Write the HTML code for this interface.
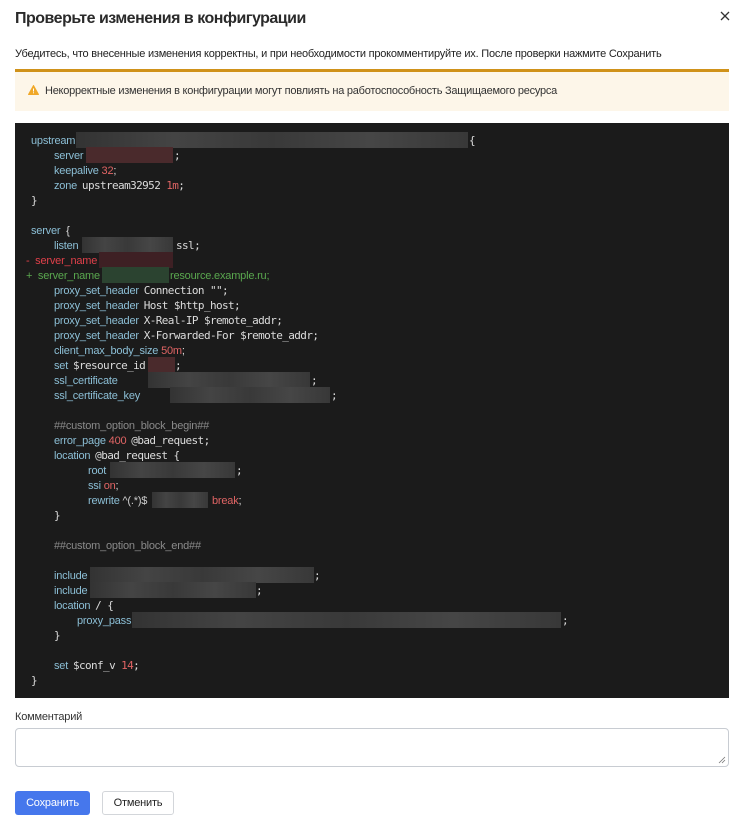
<!DOCTYPE html>
<html><head><meta charset="utf-8"><style>
*{margin:0;padding:0;box-sizing:border-box}
body{width:745px;height:827px;background:#fff;font-family:"Liberation Sans",sans-serif;color:#222;position:relative;overflow:hidden}
.a{position:absolute;white-space:nowrap}
h1{position:absolute;left:15px;top:10px;font-size:16px;font-weight:bold;color:#2a2a2a;letter-spacing:-0.5px}
.code{position:absolute;left:15px;top:123px;width:714px;height:575px;background:#1b1b1b}
.s{position:absolute;white-space:nowrap;font-family:"Liberation Sans",sans-serif;font-size:11px;line-height:14px;color:#8cbfd6;letter-spacing:-0.2px}
.m{position:absolute;white-space:nowrap;font-family:"DejaVu Sans Mono","Liberation Mono",monospace;font-size:11px;line-height:14px;color:#dcdcdc;letter-spacing:-0.6px}
.s .m{margin-left:2px}
.r{color:#e06464}
.c{color:#8a8a8a}
.b{position:absolute;height:16px;background:linear-gradient(90deg,#333,#444,#393939,#464646,#383838)}
.br{background:#4a2a2c}
.bg{background:#2b4330}
</style></head><body>
<h1>Проверьте изменения в конфигурации</h1>
<svg class="a" style="left:720px;top:11px" width="10" height="10"><path d="M1 1L9 9M9 1L1 9" stroke="#333" stroke-width="1.3"/></svg>
<div class="a" style="left:15px;top:48px;font-size:11px;color:#222;letter-spacing:-0.22px">Убедитесь, что внесенные изменения корректны, и при необходимости прокомментируйте их. После проверки нажмите Сохранить</div>
<div class="a" style="left:15px;top:69px;width:714px;height:3px;background:#d0921a"></div>
<div class="a" style="left:15px;top:72px;width:714px;height:39px;background:#fdf6e9"></div>
<svg class="a" style="left:28px;top:85px" width="11" height="10" viewBox="0 0 11 10"><path d="M5.5 0.5 L10.5 9.5 L0.5 9.5 Z" fill="#f0a828" stroke="#f0a828" stroke-linejoin="round"/><rect x="5" y="3.5" width="1" height="3" fill="#fff"/><rect x="5" y="7.3" width="1" height="1" fill="#fff"/></svg>
<div class="a" style="left:45px;top:85px;font-size:11px;color:#333;letter-spacing:-0.25px">Некорректные изменения в конфигурации могут повлиять на работоспособность Защищаемого ресурса</div>

<div class="code"></div>
<div class="s" style="left:31px;top:134px">upstream</div><div class="b" style="left:76px;top:132px;width:392px"></div><div class="m" style="left:469px;top:134px">{</div>
<div class="s" style="left:54px;top:149px">server</div><div class="b br" style="left:86px;top:147px;width:87px"></div><div class="m" style="left:174px;top:149px">;</div>
<div class="s" style="left:54px;top:164px">keepalive <span class="r">32</span><span style="color:#ddd">;</span></div>
<div class="s" style="left:54px;top:179px">zone <span class="m" style="position:static">upstream32952 <span class="r">1m</span>;</span></div>
<div class="m" style="left:31px;top:194px">}</div>
<div class="s" style="left:31px;top:224px">server &nbsp;<span style="color:#ddd">{</span></div>
<div class="s" style="left:54px;top:239px">listen</div><div class="b" style="left:82px;top:237px;width:91px"></div><div class="m" style="left:176px;top:239px">ssl;</div>
<div class="s" style="left:26px;top:254px;color:#e0404a">-&nbsp; server_name</div><div class="b br" style="left:99px;top:252px;width:74px;background:#3e2024"></div>
<div class="s" style="left:26px;top:269px;color:#5aa84f">+&nbsp; server_name</div><div class="b bg" style="left:102px;top:267px;width:67px"></div><div class="s" style="left:170px;top:269px;color:#5aa84f">resource.example.ru;</div>
<div class="s" style="left:54px;top:284px">proxy_set_header <span class="m" style="position:static">Connection "";</span></div>
<div class="s" style="left:54px;top:299px">proxy_set_header <span class="m" style="position:static">Host $http_host;</span></div>
<div class="s" style="left:54px;top:314px">proxy_set_header <span class="m" style="position:static">X-Real-IP $remote_addr;</span></div>
<div class="s" style="left:54px;top:329px">proxy_set_header <span class="m" style="position:static">X-Forwarded-For $remote_addr;</span></div>
<div class="s" style="left:54px;top:344px">client_max_body_size <span class="r">50m</span><span style="color:#ddd">;</span></div>
<div class="s" style="left:54px;top:359px">set <span class="m" style="position:static">$resource_id</span></div><div class="b br" style="left:148px;top:357px;width:27px"></div><div class="m" style="left:175px;top:359px">;</div>
<div class="s" style="left:54px;top:374px">ssl_certificate</div><div class="b" style="left:148px;top:372px;width:162px"></div><div class="m" style="left:311px;top:374px">;</div>
<div class="s" style="left:54px;top:389px">ssl_certificate_key</div><div class="b" style="left:170px;top:387px;width:160px"></div><div class="m" style="left:331px;top:389px">;</div>
<div class="s c" style="left:54px;top:419px">##custom_option_block_begin##</div>
<div class="s" style="left:54px;top:434px">error_page <span class="r">400</span> <span class="m" style="position:static">@bad_request;</span></div>
<div class="s" style="left:54px;top:449px">location <span class="m" style="position:static">@bad_request {</span></div>
<div class="s" style="left:88px;top:464px">root</div><div class="b" style="left:110px;top:462px;width:125px"></div><div class="m" style="left:236px;top:464px">;</div>
<div class="s" style="left:88px;top:479px">ssi <span class="r">on</span><span style="color:#ddd">;</span></div>
<div class="s" style="left:88px;top:494px">rewrite <span style="color:#ccc">^(.*)$</span></div><div class="b" style="left:152px;top:492px;width:56px"></div><div class="s r" style="left:212px;top:494px">break<span style="color:#ddd">;</span></div>
<div class="m" style="left:54px;top:509px">}</div>
<div class="s c" style="left:54px;top:539px">##custom_option_block_end##</div>
<div class="s" style="left:54px;top:569px">include</div><div class="b" style="left:90px;top:567px;width:224px"></div><div class="m" style="left:314px;top:569px">;</div>
<div class="s" style="left:54px;top:584px">include</div><div class="b" style="left:90px;top:582px;width:166px"></div><div class="m" style="left:256px;top:584px">;</div>
<div class="s" style="left:54px;top:599px">location <span class="m" style="position:static">/ {</span></div>
<div class="s" style="left:77px;top:614px">proxy_pass</div><div class="b" style="left:132px;top:612px;width:429px"></div><div class="m" style="left:562px;top:614px">;</div>
<div class="m" style="left:54px;top:629px">}</div>
<div class="s" style="left:54px;top:659px">set <span class="m" style="position:static">$conf_v <span class="r">14</span>;</span></div>
<div class="m" style="left:31px;top:674px">}</div>

<div class="a" style="left:15px;top:711px;font-size:11px;color:#333;letter-spacing:-0.2px">Комментарий</div>
<div class="a" style="left:15px;top:728px;width:714px;height:39px;border:1px solid #c8ccd2;border-radius:4px"></div>
<svg class="a" style="left:718px;top:756px" width="8" height="8"><path d="M1 7L7 1M4 7L7 4" stroke="#777" stroke-width="0.8"/></svg>
<div class="a" style="left:15px;top:791px;width:75px;height:24px;background:#4677ec;border-radius:3px;color:#fff;font-size:11px;text-align:center;line-height:24px;letter-spacing:-0.2px">Сохранить</div>
<div class="a" style="left:102px;top:791px;width:72px;height:24px;border:1px solid #d3d6da;border-radius:3px;color:#222;font-size:11px;text-align:center;line-height:22px;letter-spacing:-0.2px">Отменить</div>
</body></html>
